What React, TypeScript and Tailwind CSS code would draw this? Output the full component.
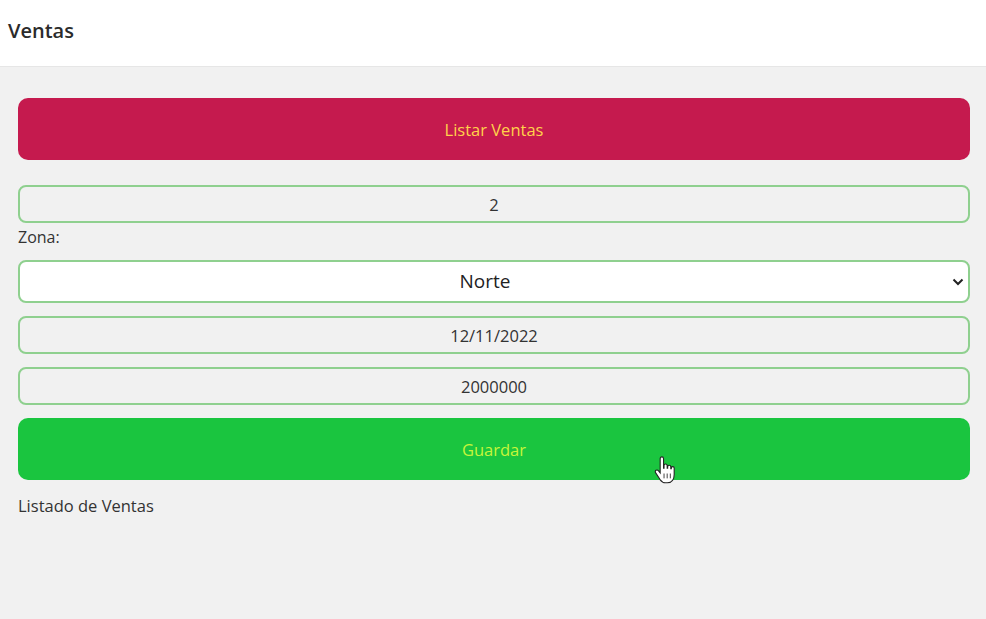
import { useState } from 'react'

const HandCursor = () => (
    <svg width="22" height="29" viewBox="0 0 18 24" className="pointer-events-none absolute left-[654px] top-[456px]">
        <path
            d="M5 2.2c0-.9.6-1.5 1.4-1.5S7.8 1.3 7.8 2.2V10h.4V8c0-.9.6-1.4 1.3-1.4s1.3.5 1.3 1.4v2h.4V9c0-.8.6-1.3 1.3-1.3s1.3.5 1.3 1.3v1.6h.4v-.6c0-.8.6-1.2 1.2-1.2s1.2.4 1.2 1.2v5.4c0 3.6-1.8 6.8-5.6 6.8H9.3c-2 0-3.2-1-4.4-2.7L1.3 14c-.6-.9-.4-1.8.3-2.2.7-.4 1.5-.2 2.1.5L5 14V2.2z"
            fill="#fff"
            stroke="#222"
            strokeWidth="0.9"
        />
        <path d="M8.2 14.5v4M10.8 14.5v4M13.4 14.5v4" stroke="#222" strokeWidth="0.7" />
    </svg>
)

const App = () => {
    const [zona, setZona] = useState('Norte')

    return (
        <div className="relative flex min-h-[619px] flex-col bg-[#f1f1f1] font-['Open_Sans',sans-serif] text-[#333]">
            <header className="flex h-[67px] items-center border-b border-[#e6e6e6] bg-white px-2 pb-1">
                <h1 className="text-[20px] font-semibold text-[#2b2b2b]">Ventas</h1>
            </header>

            <main className="flex flex-col pl-[18px] pr-4 pt-[31px]">
                <button className="h-[62px] w-full rounded-[10px] bg-[#c51a4e] pt-[3px] text-[16.5px] font-medium text-[#ffd24a]">
                    Listar Ventas
                </button>

                <input
                    className="mt-[25px] h-[38px] w-full rounded-lg border-2 border-[#8fd08f] bg-[#f1f1f1] text-center text-[16.5px] text-[#333] outline-none"
                    defaultValue="2"
                />

                <label className="mt-[3px] text-[16px] leading-[22px] text-[#333]">Zona:</label>

                <div className="relative mt-[12px]">
                    <select
                        value={zona}
                        onChange={(e) => setZona(e.target.value)}
                        className="h-[43px] w-full appearance-none rounded-lg border-2 border-[#8fd08f] bg-white pr-[18px] text-center text-[19px] text-[#222] outline-none"
                    >
                        <option>Norte</option>
                        <option>Sur</option>
                        <option>Este</option>
                        <option>Oeste</option>
                    </select>
                    <svg width="12" height="8" viewBox="0 0 12 8" className="pointer-events-none absolute right-[6px] top-[18px]">
                        <path d="M1.5 1.5 6 6l4.5-4.5" fill="none" stroke="#222" strokeWidth="2" />
                    </svg>
                </div>

                <input
                    className="mt-[13px] h-[38px] w-full rounded-lg border-2 border-[#8fd08f] bg-[#f1f1f1] text-center text-[16.5px] text-[#333] outline-none"
                    defaultValue="12/11/2022"
                />

                <input
                    className="mt-[13px] h-[38px] w-full rounded-lg border-2 border-[#8fd08f] bg-[#f1f1f1] text-center text-[16.5px] text-[#333] outline-none"
                    defaultValue="2000000"
                />

                <button className="mt-[13px] h-[62px] w-full rounded-[10px] bg-[#1ac53f] pt-[3px] text-[16.5px] font-medium text-[#c6f53a]">
                    Guardar
                </button>

                <p className="mt-[14px] text-[16.5px] text-[#333]">Listado de Ventas</p>
            </main>

            <HandCursor />
        </div>
    )
}

export default App
